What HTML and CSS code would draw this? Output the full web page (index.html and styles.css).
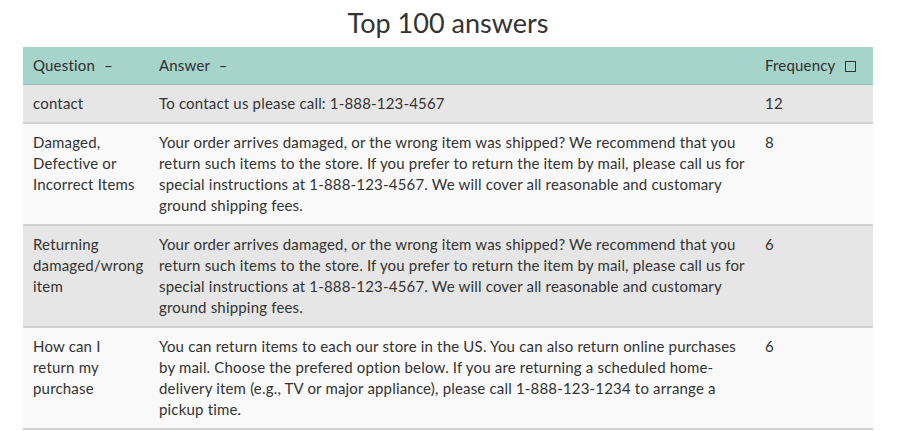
FILE: index.html
```html
<!DOCTYPE html>
<html>
<head>
<meta charset="utf-8">
<link rel="stylesheet" href="styles.css">
</head>
<body>
<div class="page">
  <h1 class="title">Top 100 answers</h1>
  <table class="answers">
    <colgroup>
      <col class="c-q">
      <col class="c-a">
      <col class="c-f">
    </colgroup>
    <thead>
      <tr>
        <th>Question <span class="sort">–</span></th>
        <th>Answer <span class="sort">–</span></th>
        <th>Frequency <span class="box"></span></th>
      </tr>
    </thead>
    <tbody>
      <tr class="odd">
        <td>contact</td>
        <td>To contact us please call: 1-888-123-4567</td>
        <td>12</td>
      </tr>
      <tr class="even">
        <td>Damaged, Defective or Incorrect Items</td>
        <td>Your order arrives damaged, or the wrong item was shipped? We recommend that you return such items to the store. If you prefer to return the item by mail, please call us for special instructions at 1-888-123-4567. We will cover all reasonable and customary ground shipping fees.</td>
        <td>8</td>
      </tr>
      <tr class="odd">
        <td>Returning damaged/wrong item</td>
        <td>Your order arrives damaged, or the wrong item was shipped? We recommend that you return such items to the store. If you prefer to return the item by mail, please call us for special instructions at 1-888-123-4567. We will cover all reasonable and customary ground shipping fees.</td>
        <td>6</td>
      </tr>
      <tr class="even">
        <td>How can I return my purchase</td>
        <td>You can return items to each our store in the US. You can also return online purchases by mail. Choose the prefered option below. If you are returning a scheduled home-delivery item (e.g., TV or major appliance), please call 1-888-123-1234 to arrange a pickup time.</td>
        <td>6</td>
      </tr>
    </tbody>
  </table>
</div>
</body>
</html>
```
FILE: styles.css
```css
html, body {
  margin: 0;
  padding: 0;
  background: #ffffff;
}
body {
  font-family: Lato, "Open Sans", sans-serif;
  color: #333333;
}
.page {
  padding: 0 26px 0 23px;
}
.title {
  margin: 0;
  padding-top: 6px;
  height: 41px;
  text-align: center;
  font-size: 27px;
  font-weight: 400;
  line-height: 34px;
  color: #333333;
}
.answers {
  width: 850px;
  border-collapse: collapse;
  table-layout: fixed;
  font-size: 15px;
  letter-spacing: 0.18px;
  line-height: 21px;
}
.c-q { width: 127px; }
.c-a { width: 606px; }
.c-f { width: 117px; }
.answers th {
  background: #a7d4ca;
  text-align: left;
  font-weight: 400;
  padding: 8px 9px 8px 10px;
  border-bottom: 1px solid #93bdb4;
  height: 21px;
  color: #2e2e2e;
}
.answers td {
  vertical-align: top;
  padding: 8px 9px 8px 10px;
  border-bottom: 2px solid #d0d0d0;
}
.answers td:nth-child(2), .answers th:nth-child(2) { padding-left: 9px; padding-right: 5px; }
.answers td:nth-child(3), .answers th:nth-child(3) { padding-left: 9px; }
.odd td { background: #e6e6e6; }
.even td { background: #f9f9f9; }
.sort { margin-left: 5px; }
.box {
  display: inline-block;
  width: 9px;
  height: 9px;
  border: 1.5px solid #333333;
  margin-left: 6px;
  vertical-align: -1px;
}
```
